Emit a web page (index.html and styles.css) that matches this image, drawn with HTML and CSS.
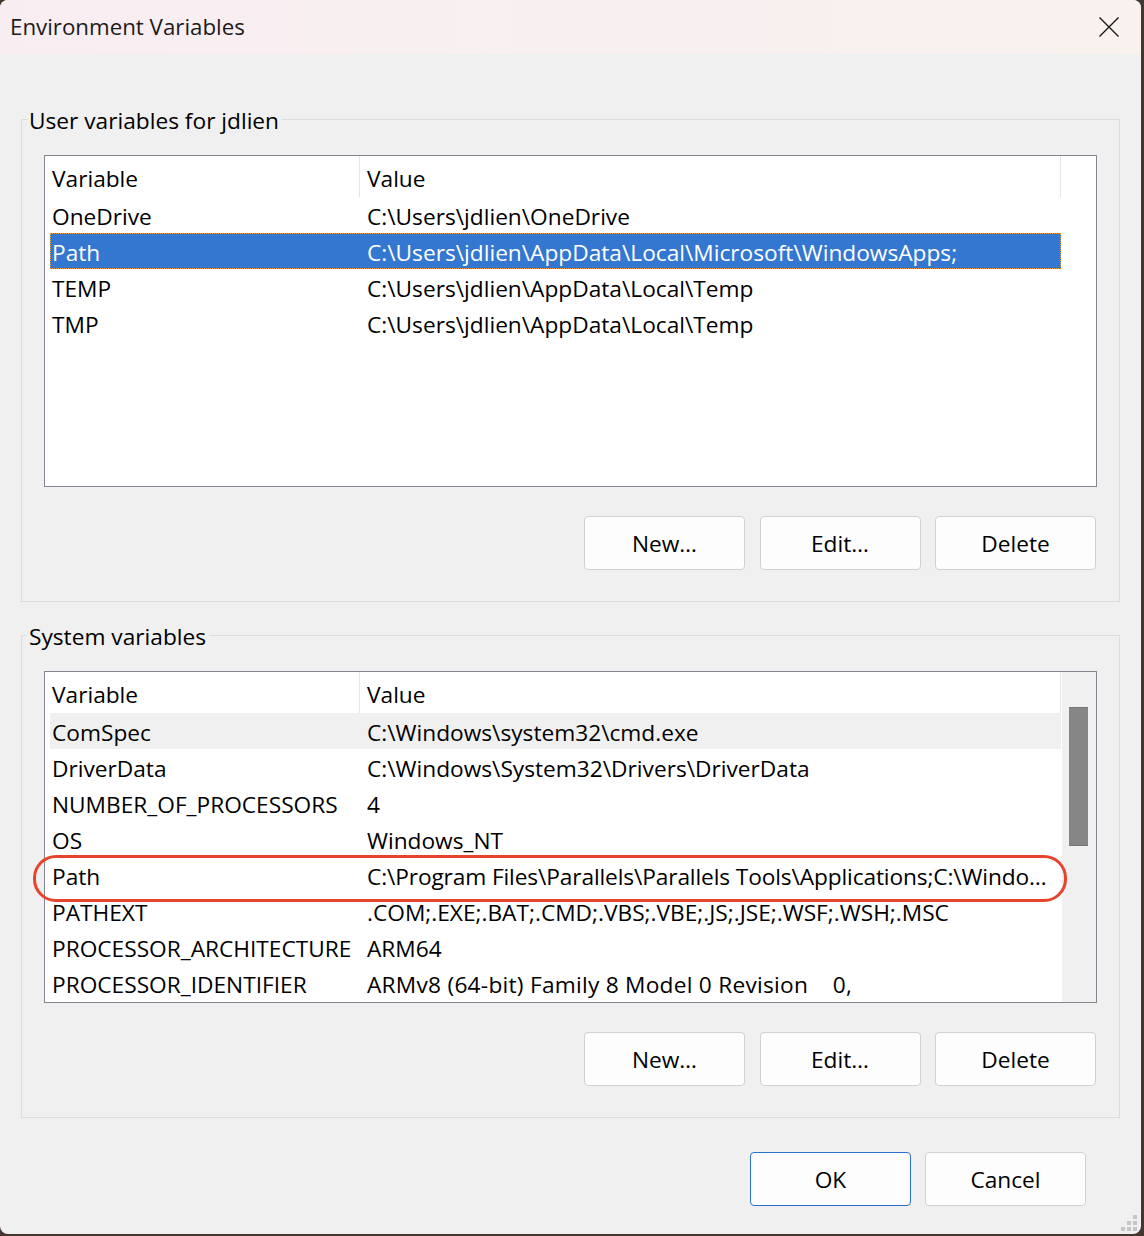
FILE: index.html
```html
<!DOCTYPE html>
<html lang="en">
<head>
<meta charset="utf-8">
<title>Environment Variables</title>
<link rel="stylesheet" href="styles.css">
</head>
<body>
<div class="window">
  <header class="titlebar">
    <span class="title">Environment Variables</span>
    <svg class="close" viewBox="0 0 20 20" aria-label="Close"><path d="M0.5 0.5 L19.5 19.5 M19.5 0.5 L0.5 19.5" stroke="#1a1a1a" stroke-width="1.4" fill="none"/></svg>
  </header>

  <main class="content">
    <section class="group group-user">
      <div class="group-title">User variables for jdlien</div>
      <div class="list-wrap">
        <div class="list">
          <div class="list-body">
            <div class="list-header">
              <div class="hcol-var">Variable</div>
              <div class="hcol-val">Value</div>
            </div>
            <div class="row"><div class="col-var">OneDrive</div><div class="col-val">C:\Users\jdlien\OneDrive</div></div>
            <div class="row selected"><div class="col-var">Path</div><div class="col-val">C:\Users\jdlien\AppData\Local\Microsoft\WindowsApps;</div></div>
            <div class="row"><div class="col-var">TEMP</div><div class="col-val">C:\Users\jdlien\AppData\Local\Temp</div></div>
            <div class="row"><div class="col-var">TMP</div><div class="col-val">C:\Users\jdlien\AppData\Local\Temp</div></div>
          </div>
        </div>
      </div>
      <div class="buttons">
        <button class="btn">New…</button>
        <button class="btn">Edit…</button>
        <button class="btn">Delete</button>
      </div>
    </section>

    <section class="group group-sys">
      <div class="group-title">System variables</div>
      <div class="list-wrap">
        <div class="list">
          <div class="list-body">
            <div class="list-header">
              <div class="hcol-var">Variable</div>
              <div class="hcol-val">Value</div>
            </div>
            <div class="row hover"><div class="col-var">ComSpec</div><div class="col-val">C:\Windows\system32\cmd.exe</div></div>
            <div class="row"><div class="col-var">DriverData</div><div class="col-val">C:\Windows\System32\Drivers\DriverData</div></div>
            <div class="row"><div class="col-var">NUMBER_OF_PROCESSORS</div><div class="col-val">4</div></div>
            <div class="row"><div class="col-var">OS</div><div class="col-val">Windows_NT</div></div>
            <div class="row"><div class="col-var">Path</div><div class="col-val val-tight">C:\Program Files\Parallels\Parallels Tools\Applications;C:\Windo…</div></div>
            <div class="row"><div class="col-var">PATHEXT</div><div class="col-val">.COM;.EXE;.BAT;.CMD;.VBS;.VBE;.JS;.JSE;.WSF;.WSH;.MSC</div></div>
            <div class="row"><div class="col-var">PROCESSOR_ARCHITECTURE</div><div class="col-val">ARM64</div></div>
            <div class="row"><div class="col-var">PROCESSOR_IDENTIFIER</div><div class="col-val val-wide">ARMv8 (64-bit) Family 8 Model 0 Revision    0,</div></div>
          </div>
          <div class="scrollbar"><div class="thumb"></div></div>
        </div>
        <div class="annot"></div>
      </div>
      <div class="buttons">
        <button class="btn">New…</button>
        <button class="btn">Edit…</button>
        <button class="btn">Delete</button>
      </div>
    </section>

    <div class="dialog-buttons">
      <button class="btn btn-default">OK</button>
      <button class="btn">Cancel</button>
    </div>
  </main>

  <svg class="grip" viewBox="0 0 16 16" aria-hidden="true">
    <rect x="12" y="0" width="4" height="4"/>
    <rect x="6" y="6" width="4" height="4"/>
    <rect x="12" y="6" width="4" height="4"/>
    <rect x="0" y="12" width="4" height="4"/>
    <rect x="6" y="12" width="4" height="4"/>
    <rect x="12" y="12" width="4" height="4"/>
  </svg>
</div>
</body>
</html>
```
FILE: styles.css
```css
* {
  box-sizing: border-box;
}

html,
body {
  margin: 0;
  height: 100%;
}

body {
  background: #45362f;
  font-family: "Open Sans", "Noto Sans", sans-serif;
  font-size: 22.7px;
  color: #000;
}

.window {
  position: relative;
  width: 1141px;
  height: 1234px;
  background: #f0f0f0;
  border-radius: 8px;
  overflow: hidden;
  display: flex;
  flex-direction: column;
}

/* Title bar */
.titlebar {
  flex: 0 0 54px;
  display: flex;
  align-items: center;
  justify-content: space-between;
  padding: 0 22px 0 10px;
  background: linear-gradient(90deg, #f8eef2, #f8f1ee);
}

.title {
  font-size: 22.3px;
  line-height: 30px;
  color: #1b1b1b;
}

.close {
  width: 20px;
  height: 20px;
  margin-top: -1px;
}

/* Content */
.content {
  display: flex;
  flex-direction: column;
  padding: 0 21px;
}

.group {
  border: 1px solid #dcdcdc;
  padding: 0 22px 31px 22px;
}

.group-user {
  margin-top: 65px;
}

.group-sys {
  margin-top: 33px;
}

.group-title {
  width: fit-content;
  margin: -12px 0 0 -17px;
  padding: 0 3px 0 2px;
  line-height: 26px;
  background: #f0f0f0;
}

.list-wrap {
  position: relative;
  margin-top: 21px;
}

.list {
  height: 332px;
  border: 1px solid #828790;
  background: #fff;
  display: flex;
}

.list-body {
  flex: 0 0 1017px;
  padding: 0 1px 0 5px;
  overflow: hidden;
}

.list-header {
  display: flex;
  height: 41px;
}

.hcol-var,
.hcol-val {
  flex: none;
  padding-top: 5px;
  line-height: 36px;
  border-right: 1px solid #e5e5e5;
}

.hcol-var {
  width: 310px;
  padding-left: 2px;
}

.hcol-val {
  width: 701px;
  padding-left: 7px;
}

.row {
  display: flex;
  height: 36px;
  padding-top: 4px;
  line-height: 32px;
  white-space: pre;
}

.col-var {
  flex: none;
  width: 309px;
  padding-left: 2px;
}

.col-val {
  flex: 1;
  padding-left: 8px;
}

.val-tight {
  letter-spacing: -0.12px;
}

.val-wide {
  letter-spacing: 0.25px;
}

.row.selected {
  background: #3477d0;
  color: #fff;
  outline: 1px dotted #ee9a3a;
  outline-offset: -1px;
}

.row.hover {
  background: #f0f0f0;
}

.scrollbar {
  flex: 1;
  background: #f0f0f0;
  padding: 35px 0 0 7px;
}

.thumb {
  width: 19px;
  height: 139px;
  background: #868686;
  border-top: 1px solid #777;
  border-bottom: 1px solid #777;
}

.annot {
  position: absolute;
  left: -11px;
  top: 184px;
  width: 1034px;
  height: 47px;
  border: 3px solid #e8432c;
  border-radius: 23px;
  pointer-events: none;
}

/* Buttons */
.buttons {
  display: flex;
  justify-content: flex-end;
  gap: 14.5px;
  margin-top: 29px;
  padding-right: 1px;
}

.btn {
  width: 161px;
  height: 54px;
  padding: 0;
  border: 1px solid #d1d1d1;
  border-radius: 4px;
  background: #fdfdfd;
  font: inherit;
  line-height: 54px;
  color: #000;
}

.btn-default {
  border-color: #2f6fcc;
}

.dialog-buttons {
  display: flex;
  justify-content: flex-end;
  gap: 14px;
  margin: 34px 34px 0 0;
}

.grip {
  position: absolute;
  right: 4px;
  bottom: 3px;
  width: 16px;
  height: 16px;
  fill: #c6c6c6;
}
```
